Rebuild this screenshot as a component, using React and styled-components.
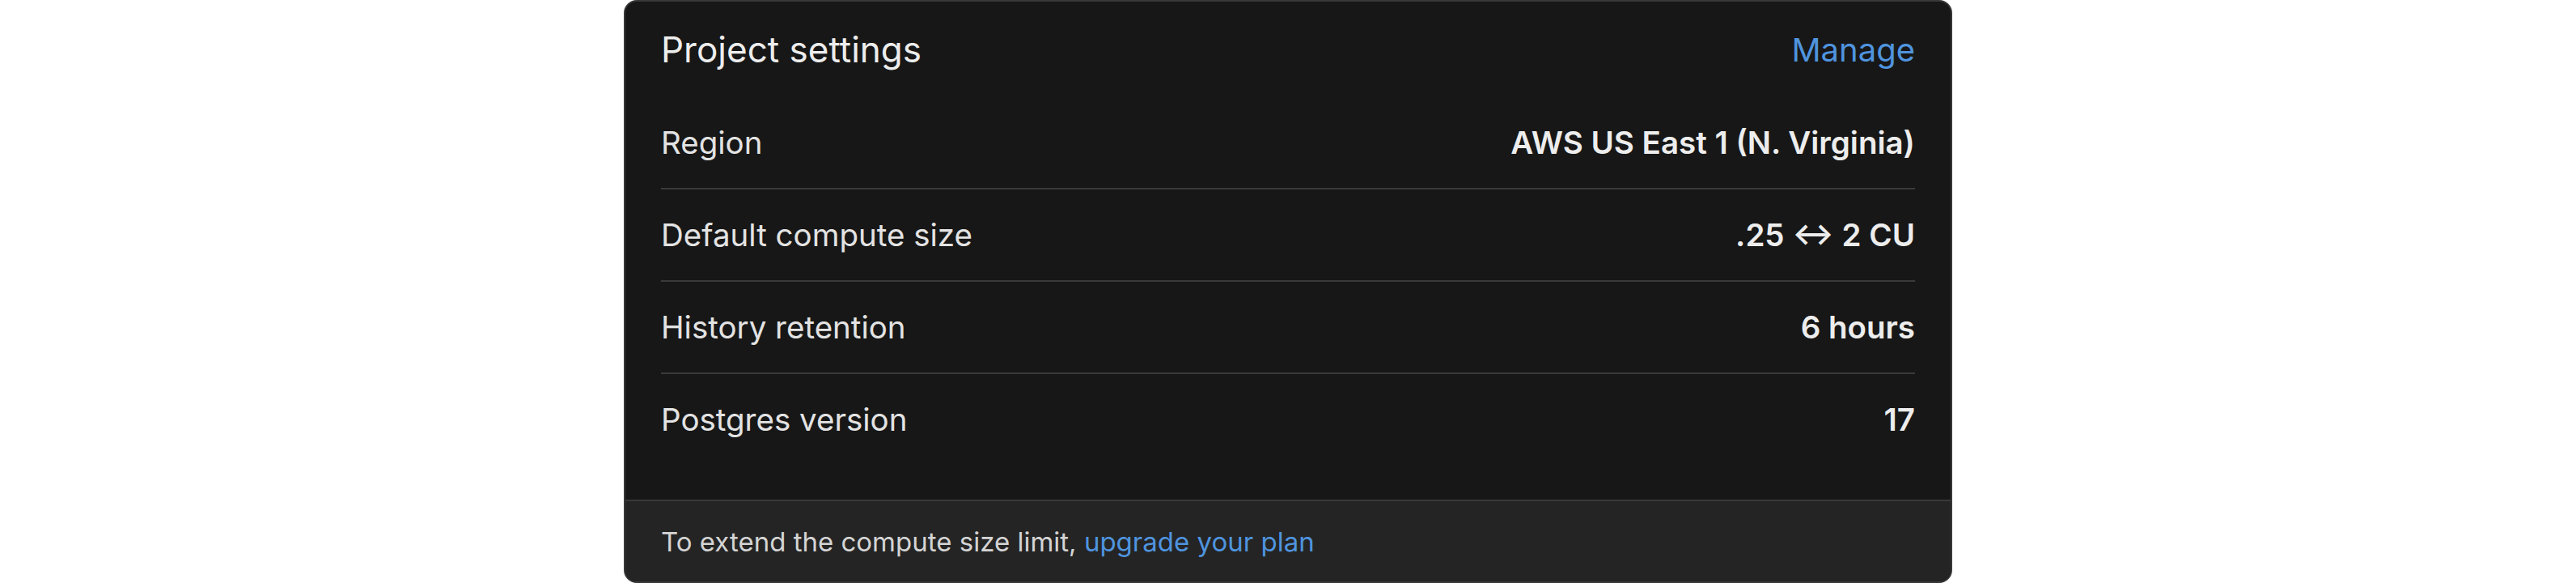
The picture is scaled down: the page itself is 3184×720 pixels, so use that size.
import React from 'react';
import styled, { createGlobalStyle } from 'styled-components';

const GlobalStyle = createGlobalStyle`
  html, body {
    margin: 0;
    padding: 0;
    background: #ffffff;
  }
  body {
    font-family: Inter, "Noto Sans", "Liberation Sans", sans-serif;
    -webkit-font-smoothing: antialiased;
  }
`;

const settings = [
  { label: 'Region', value: 'AWS US East 1 (N. Virginia)' },
  { label: 'Default compute size', value: '.25 \u2194 2 CU' },
  { label: 'History retention', value: '6 hours' },
  { label: 'Postgres version', value: '17' },
];

const App = () => (
  <Page>
    <GlobalStyle />
    <Card>
      <Body>
        <Header>
          <Title>Project settings</Title>
          <Link href="#manage" $size={40}>Manage</Link>
        </Header>
        {settings.map((s, i) => (
          <Row key={s.label} $last={i === settings.length - 1}>
            <Label>{s.label}</Label>
            <Value>{s.value}</Value>
          </Row>
        ))}
      </Body>
      <Footer>
        To extend the compute size limit,&nbsp;
        <Link href="#upgrade" $size={33}>upgrade your plan</Link>
      </Footer>
    </Card>
  </Page>
);

const Page = styled.div`
  display: flex;
  justify-content: center;
  height: 720px;
`;

const Card = styled.div`
  width: 1642px;
  height: 720px;
  box-sizing: border-box;
  display: flex;
  flex-direction: column;
  background: #171717;
  border: 2px solid #383838;
  border-radius: 16px;
  overflow: hidden;
`;

const Body = styled.div`
  flex: 1;
  padding: 0 44px;
`;

const Header = styled.div`
  height: 118px;
  display: flex;
  align-items: center;
  justify-content: space-between;
`;

const Title = styled.h2`
  margin: 0;
  font-size: 44px;
  font-weight: 400;
  color: #ededed;
`;

const Row = styled.div`
  height: 112px;
  display: flex;
  align-items: center;
  justify-content: space-between;
  border-bottom: ${(p) => (p.$last ? 'none' : '2px solid #3a3a3a')};
`;

const Label = styled.span`
  font-size: 38.5px;
  color: #e3e3e3;
`;

const Value = styled.span`
  font-size: 38.5px;
  font-weight: 600;
  color: #ededed;
`;

const Link = styled.a`
  font-size: ${(p) => p.$size}px;
  font-weight: 400;
  color: #4f94df;
  text-decoration: none;
`;

const Footer = styled.div`
  height: 99px;
  display: flex;
  align-items: center;
  padding: 0 44px;
  background: #242424;
  border-top: 2px solid #383838;
  font-size: 33px;
  color: #d4d4d4;
`;

export default App;
